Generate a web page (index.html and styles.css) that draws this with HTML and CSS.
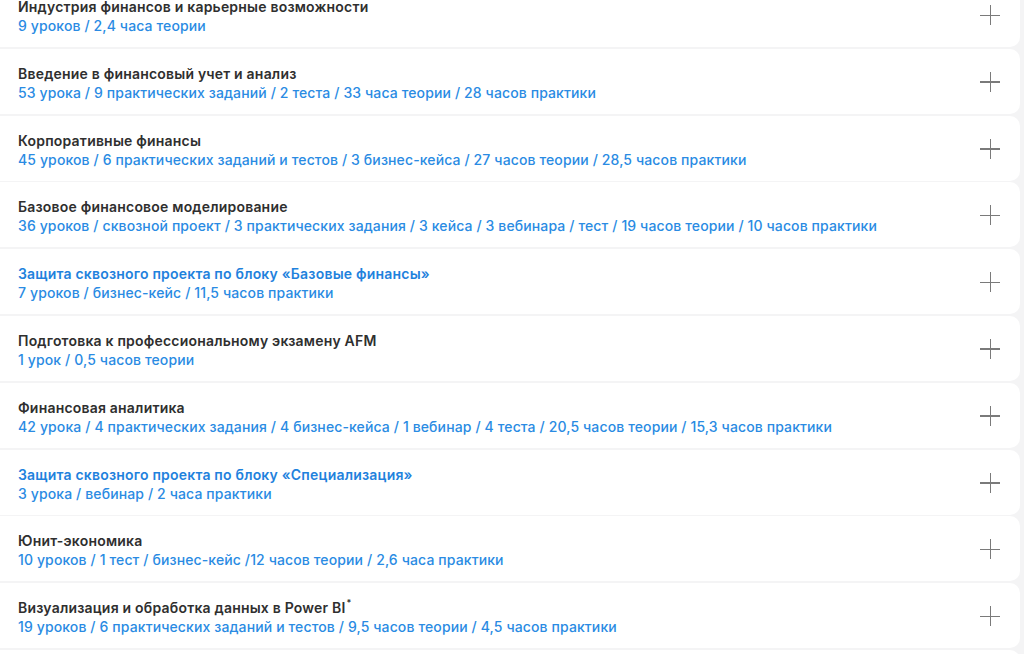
FILE: index.html
```html
<!DOCTYPE html>
<html lang="ru">
<head>
<meta charset="utf-8">
<link rel="stylesheet" href="styles.css">
</head>
<body>
<div class="list">
  <div class="card"><div class="text"><div class="title">Индустрия финансов и карьерные возможности</div><div class="meta">9 уроков / 2,4 часа теории</div></div><span class="plus"></span></div>
  <div class="card"><div class="text"><div class="title">Введение в финансовый учет и анализ</div><div class="meta">53 урока / 9 практических заданий / 2 теста / 33 часа теории / 28 часов практики</div></div><span class="plus"></span></div>
  <div class="card"><div class="text"><div class="title">Корпоративные финансы</div><div class="meta">45 уроков / 6 практических заданий и тестов / 3 бизнес-кейса / 27 часов теории / 28,5 часов практики</div></div><span class="plus"></span></div>
  <div class="card"><div class="text"><div class="title">Базовое финансовое моделирование</div><div class="meta">36 уроков / сквозной проект / 3 практических задания / 3 кейса / 3 вебинара / тест / 19 часов теории / 10 часов практики</div></div><span class="plus"></span></div>
  <div class="card"><div class="text"><div class="title blue">Защита сквозного проекта по блоку «Базовые финансы»</div><div class="meta">7 уроков / бизнес-кейс / 11,5 часов практики</div></div><span class="plus"></span></div>
  <div class="card"><div class="text"><div class="title">Подготовка к профессиональному экзамену AFM</div><div class="meta">1 урок / 0,5 часов теории</div></div><span class="plus"></span></div>
  <div class="card"><div class="text"><div class="title">Финансовая аналитика</div><div class="meta">42 урока / 4 практических задания / 4 бизнес-кейса / 1 вебинар / 4 теста / 20,5 часов теории / 15,3 часов практики</div></div><span class="plus"></span></div>
  <div class="card"><div class="text"><div class="title blue">Защита сквозного проекта по блоку «Специализация»</div><div class="meta">3 урока / вебинар / 2 часа практики</div></div><span class="plus"></span></div>
  <div class="card"><div class="text"><div class="title">Юнит-экономика</div><div class="meta">10 уроков / 1 тест / бизнес-кейс /12 часов теории / 2,6 часа практики</div></div><span class="plus"></span></div>
  <div class="card"><div class="text"><div class="title">Визуализация и обработка данных в Power BI<sup class="star">*</sup></div><div class="meta">19 уроков / 6 практических заданий и тестов / 9,5 часов теории / 4,5 часов практики</div></div><span class="plus"></span></div>
  <div class="card"></div>
</div>
</body>
</html>
```
FILE: styles.css
```css
html, body {
  margin: 0;
  padding: 0;
}
body {
  background: #f4f4f5;
  font-family: Inter, "Noto Sans", sans-serif;
  width: 1024px;
  height: 654px;
  overflow: hidden;
}
.list {
  display: flex;
  flex-direction: column;
  gap: 1.8px;
  margin-top: -18px;
  width: 1020px;
}
.card {
  background: #fff;
  height: 65px;
  border-radius: 0 10px 10px 0;
  display: flex;
  align-items: center;
  justify-content: space-between;
  padding: 0 20px 0 18px;
  box-sizing: border-box;
  flex-shrink: 0;
}
.text {
  display: flex;
  flex-direction: column;
  gap: 0;
  padding-top: 3px;
}
.title {
  font-size: 14px;
  line-height: 19px;
  font-weight: 600;
  letter-spacing: 0.2px;
  color: #2f2f2f;
}
.title.blue {
  color: #1f82dd;
}
.star {
  font-size: 9px;
  line-height: 0;
  vertical-align: 7px;
  margin-left: 1px;
}
.meta {
  font-size: 14px;
  line-height: 19px;
  font-weight: 500;
  letter-spacing: 0.12px;
  color: #2a8be3;
}
.plus {
  position: relative;
  width: 20px;
  height: 20px;
  margin-top: 1px;
}
.plus::before, .plus::after {
  content: "";
  position: absolute;
  background: #7a7a7a;
}
.plus::before {
  left: 0;
  right: 0;
  top: 9.5px;
  height: 1.5px;
}
.plus::after {
  top: 0;
  bottom: 0;
  left: 9.5px;
  width: 1.5px;
}
```
